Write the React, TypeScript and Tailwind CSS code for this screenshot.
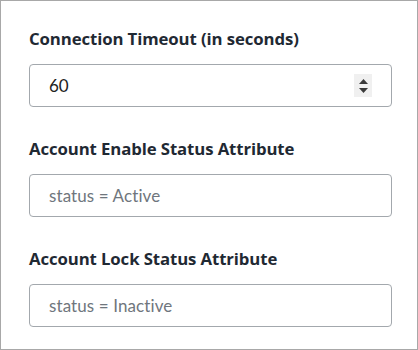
import React from "react";

const font = { fontFamily: "Lato, 'Noto Sans', sans-serif" };
const labelFont = { fontFamily: "'Open Sans', 'Noto Sans', sans-serif" };

function Field({ label, value, placeholder, spinner }: { label: string; value?: string; placeholder?: string; spinner?: boolean }) {
  return (
    <div className="flex flex-col">
      <div style={labelFont} className="text-[16.75px] leading-[24px] font-bold tracking-[-0.1px] text-[#1f2933]">{label}</div>
      <div className="mt-[13px] h-[43px] w-[363px] rounded-[4px] border border-[#a3a8ad] bg-white flex items-center pl-[19px] pr-[19px]">
        <span className={value ? "text-[17px] text-[#222]" : "text-[17px] tracking-[0.1px] text-[#6f767d]"}>{value ?? placeholder}</span>
        {spinner && (
          <div className="ml-auto w-[18px] h-[23px] bg-[#f0f0f0] flex flex-col items-center justify-center gap-[4px]">
            <svg width="9" height="5" viewBox="0 0 9 5"><path d="M4.5 0 L9 5 L0 5 Z" fill="#3a3a3a" /></svg>
            <svg width="9" height="5" viewBox="0 0 9 5"><path d="M0 0 L9 0 L4.5 5 Z" fill="#3a3a3a" /></svg>
          </div>
        )}
      </div>
    </div>
  );
}

export default function App() {
  return (
    <div style={font} className="w-[418px] h-[350px] border border-[#a8a8a8] bg-white pl-[28px] pt-[26px] flex flex-col gap-[30px]">
      <Field label="Connection Timeout (in seconds)" value="60" spinner />
      <Field label="Account Enable Status Attribute" placeholder="status = Active" />
      <Field label="Account Lock Status Attribute" placeholder="status = Inactive" />
    </div>
  );
}
